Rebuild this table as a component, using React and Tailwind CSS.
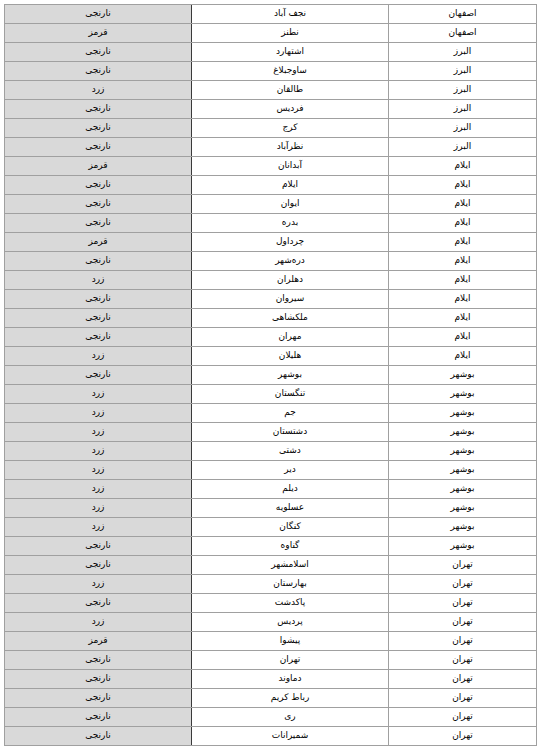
import React from "react";

const rows = [
  ["نارنجی", "نجف آباد", "اصفهان"],
  ["قرمز", "نطنز", "اصفهان"],
  ["نارنجی", "اشتهارد", "البرز"],
  ["نارنجی", "ساوجبلاغ", "البرز"],
  ["زرد", "طالقان", "البرز"],
  ["نارنجی", "فردیس", "البرز"],
  ["نارنجی", "کرج", "البرز"],
  ["نارنجی", "نظرآباد", "البرز"],
  ["قرمز", "آبدانان", "ایلام"],
  ["نارنجی", "ایلام", "ایلام"],
  ["نارنجی", "ایوان", "ایلام"],
  ["نارنجی", "بدره", "ایلام"],
  ["قرمز", "چرداول", "ایلام"],
  ["نارنجی", "دره‌شهر", "ایلام"],
  ["زرد", "دهلران", "ایلام"],
  ["نارنجی", "سیروان", "ایلام"],
  ["نارنجی", "ملکشاهی", "ایلام"],
  ["نارنجی", "مهران", "ایلام"],
  ["زرد", "هلیلان", "ایلام"],
  ["نارنجی", "بوشهر", "بوشهر"],
  ["زرد", "تنگستان", "بوشهر"],
  ["زرد", "جم", "بوشهر"],
  ["زرد", "دشتستان", "بوشهر"],
  ["زرد", "دشتی", "بوشهر"],
  ["زرد", "دیر", "بوشهر"],
  ["زرد", "دیلم", "بوشهر"],
  ["زرد", "عسلویه", "بوشهر"],
  ["زرد", "کنگان", "بوشهر"],
  ["نارنجی", "گناوه", "بوشهر"],
  ["نارنجی", "اسلامشهر", "تهران"],
  ["زرد", "بهارستان", "تهران"],
  ["نارنجی", "پاکدشت", "تهران"],
  ["زرد", "پردیس", "تهران"],
  ["قرمز", "پیشوا", "تهران"],
  ["نارنجی", "تهران", "تهران"],
  ["نارنجی", "دماوند", "تهران"],
  ["نارنجی", "رباط کریم", "تهران"],
  ["نارنجی", "ری", "تهران"],
  ["نارنجی", "شمیرانات", "تهران"],
];

export default function App() {
  return (
    <div className="bg-white w-[542px] h-[751px] pt-[4px] pl-[4px] text-black font-['DejaVu_Sans',sans-serif] text-[9px]">
      <div className="w-[533px] border-t border-l border-[#a0a0a0]">
        {rows.map((r, i) => (
          <div key={i} className="flex h-[19px] border-b border-[#a0a0a0]">
            <div dir="rtl" className="w-[187px] bg-[#d9d9d9] border-r border-[#3a3a3a] flex items-center justify-center">
              {r[0]}
            </div>
            <div dir="rtl" className="w-[197px] border-r border-[#a0a0a0] flex items-center justify-center">
              {r[1]}
            </div>
            <div dir="rtl" className="w-[148px] border-r border-[#a0a0a0] flex items-center justify-center">
              {r[2]}
            </div>
          </div>
        ))}
      </div>
    </div>
  );
}
